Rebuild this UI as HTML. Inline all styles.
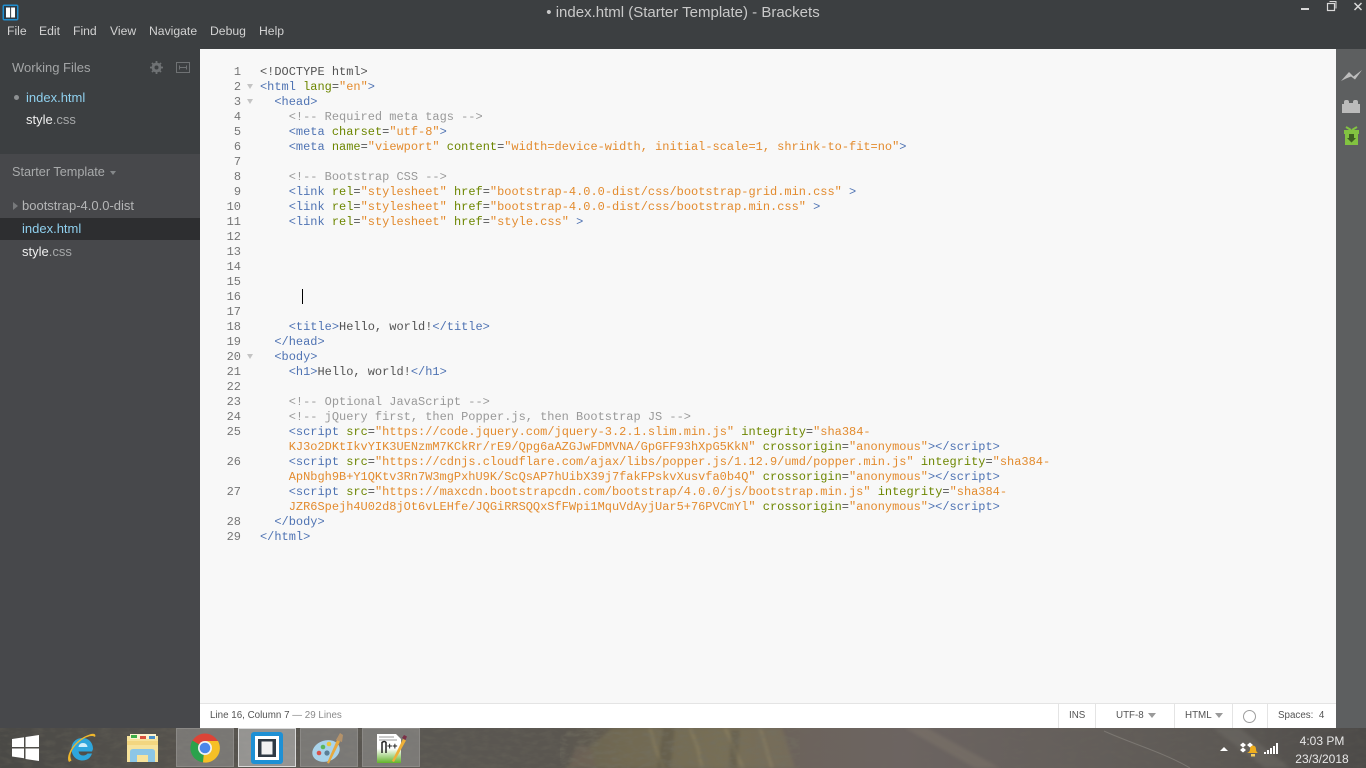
<!DOCTYPE html>
<html><head><meta charset="utf-8"><title>index.html (Starter Template) - Brackets</title>
<style>
html,body{margin:0;padding:0;width:1366px;height:768px;overflow:hidden;background:#3c3f41}
*{box-sizing:border-box}
.a{position:absolute;white-space:pre}
body{font-family:"Liberation Sans",sans-serif}
#tb{left:0;top:0;width:1366px;height:49px;background:#3c3f41}
.m{position:absolute;top:23px;font-size:12.2px;line-height:16px;color:#d2d2d2}
.sb{font-size:12.6px;line-height:16px}
#code,#gut{font-family:"Liberation Mono","DejaVu Sans Mono",monospace;font-size:11.97px;line-height:15px;margin:0}
#code{left:260px;top:65px;color:#535353}
#gut{left:215px;top:65px;width:26px;text-align:right;color:#767676}
.t{color:#4f73b3}.r{color:#6d8600}.s{color:#e38b2e}.c{color:#999}
.st{position:absolute;top:709px;font-size:9.8px;line-height:14px;color:#535353}
.dv{position:absolute;top:704px;width:1px;height:24px;background:#e4e4e4}
.box{position:absolute;top:728px;width:58px;height:39px;border:1px solid #8b8986;background:rgba(170,170,170,.42)}
</style></head><body>
<div class="a" id="tb"></div>
<svg class="a" style="left:2px;top:4px" width="17" height="17" viewBox="0 0 17 17"><rect x=".5" y=".5" width="16" height="16" rx="2" fill="#1f8ed0"/><rect x="2" y="2" width="13" height="13" fill="#2d3a44"/><rect x="4" y="3.500" width="9" height="10" fill="#fff"/><rect x="8.100" y="2" width="1" height="13" fill="#2d3a44"/></svg>
<div class="a" style="left:0;width:1366px;text-align:center;top:4px;font-size:15px;line-height:17px;color:#c9c9c9">• index.html (Starter Template) - Brackets</div>
<span class="m" style="left:7px">File</span><span class="m" style="left:39px">Edit</span><span class="m" style="left:73px">Find</span><span class="m" style="left:110px">View</span><span class="m" style="left:149px">Navigate</span><span class="m" style="left:210px">Debug</span><span class="m" style="left:259px">Help</span>
<svg class="a" style="left:1296px;top:0" width="70" height="14" viewBox="0 0 70 14" fill="none" stroke="#d8d8d8"><path d="M5 9h8" stroke-width="2"/><path d="M33.500 1.500h6.500v7" stroke-width="1"/><rect x="31.500" y="3.500" width="7" height="7" stroke-width="1.200"/><path d="M58.500 3l7 7M65.500 3l-7 7" stroke-width="1.500"/></svg>

<div class="a" style="left:0;top:49px;width:200px;height:105px;background:#3c3f41"></div>
<div class="a" style="left:0;top:154px;width:200px;height:574px;background:#47484b"></div>
<div class="a sb" style="left:12px;top:60px;color:#a3a5a6;font-size:13px">Working Files</div>
<svg class="a" style="left:150px;top:61px" width="13" height="13" viewBox="0 0 13 13"><circle cx="6.500" cy="6.500" r="3.600" fill="none" stroke="#6f7274" stroke-width="2.600"/><path d="M6.500 0v13M0 6.500h13M2 2l9 9M11 2l-9 9" stroke="#6f7274" stroke-width="1.800"/><circle cx="6.500" cy="6.500" r="2" fill="#3c3f41"/></svg>
<svg class="a" style="left:176px;top:62px" width="14" height="11" viewBox="0 0 14 11" fill="none" stroke="#6f7274"><rect x=".5" y=".5" width="13" height="10"/><path d="M3 5.500h8M3.500 3.500v4M10.500 3.500v4"/></svg>
<div class="a" style="left:14px;top:95px;width:5px;height:5px;border-radius:50%;background:#8d9092"></div>
<div class="a sb" style="left:26px;top:90px;color:#8fd0ee;font-size:13px">index.html</div>
<div class="a sb" style="left:26px;top:112px;color:#f0f0f0;font-size:13px">style<span style="color:#a6a8a9">.css</span></div>
<div class="a sb" style="left:12px;top:164px;color:#a8aaab;font-size:12.7px">Starter Template</div>
<div class="a" style="left:110px;top:171px;border:3px solid transparent;border-top:4px solid #85888a"></div>
<div class="a" style="left:13px;top:202px;border:4px solid transparent;border-left:5px solid #77797b"></div>
<div class="a sb" style="left:22px;top:198px;color:#b5b6b7;font-size:13px">bootstrap-4.0.0-dist</div>
<div class="a" style="left:0;top:218px;width:200px;height:22px;background:#2d2e30"></div>
<div class="a sb" style="left:22px;top:221px;color:#8fd0ee;font-size:13px">index.html</div>
<div class="a sb" style="left:22px;top:244px;color:#f0f0f0;font-size:13px">style<span style="color:#a6a8a9">.css</span></div>

<div class="a" style="left:200px;top:49px;width:1136px;height:654px;background:#f8f8f8"></div>
<pre class="a" id="gut">1
2
3
4
5
6
7
8
9
10
11
12
13
14
15
16
17
18
19
20
21
22
23
24
25

26

27

28
29</pre>
<div class="a" style="left:247px;top:84px;border:3px solid transparent;border-top:5px solid #c4c4c4"></div>
<div class="a" style="left:247px;top:99px;border:3px solid transparent;border-top:5px solid #c4c4c4"></div>
<div class="a" style="left:247px;top:354px;border:3px solid transparent;border-top:5px solid #c4c4c4"></div>
<pre class="a" id="code">&lt;!DOCTYPE html&gt;
<span class="t">&lt;html</span> <span class="r">lang</span>=<span class="s">"en"</span><span class="t">&gt;</span>
  <span class="t">&lt;head&gt;</span>
    <span class="c">&lt;!-- Required meta tags --&gt;</span>
    <span class="t">&lt;meta</span> <span class="r">charset</span>=<span class="s">"utf-8"</span><span class="t">&gt;</span>
    <span class="t">&lt;meta</span> <span class="r">name</span>=<span class="s">"viewport"</span> <span class="r">content</span>=<span class="s">"width=device-width, initial-scale=1, shrink-to-fit=no"</span><span class="t">&gt;</span>

    <span class="c">&lt;!-- Bootstrap CSS --&gt;</span>
    <span class="t">&lt;link</span> <span class="r">rel</span>=<span class="s">"stylesheet"</span> <span class="r">href</span>=<span class="s">"bootstrap-4.0.0-dist/css/bootstrap-grid.min.css"</span> <span class="t">&gt;</span>
    <span class="t">&lt;link</span> <span class="r">rel</span>=<span class="s">"stylesheet"</span> <span class="r">href</span>=<span class="s">"bootstrap-4.0.0-dist/css/bootstrap.min.css"</span> <span class="t">&gt;</span>
    <span class="t">&lt;link</span> <span class="r">rel</span>=<span class="s">"stylesheet"</span> <span class="r">href</span>=<span class="s">"style.css"</span> <span class="t">&gt;</span>






    <span class="t">&lt;title&gt;</span>Hello, world!<span class="t">&lt;/title&gt;</span>
  <span class="t">&lt;/head&gt;</span>
  <span class="t">&lt;body&gt;</span>
    <span class="t">&lt;h1&gt;</span>Hello, world!<span class="t">&lt;/h1&gt;</span>

    <span class="c">&lt;!-- Optional JavaScript --&gt;</span>
    <span class="c">&lt;!-- jQuery first, then Popper.js, then Bootstrap JS --&gt;</span>
    <span class="t">&lt;script</span> <span class="r">src</span>=<span class="s">"https://code.jquery.com/jquery-3.2.1.slim.min.js"</span> <span class="r">integrity</span>=<span class="s">"sha384-</span>
<span class="s">    KJ3o2DKtIkvYIK3UENzmM7KCkRr/rE9/Qpg6aAZGJwFDMVNA/GpGFF93hXpG5KkN"</span> <span class="r">crossorigin</span>=<span class="s">"anonymous"</span><span class="t">&gt;&lt;/script&gt;</span>
    <span class="t">&lt;script</span> <span class="r">src</span>=<span class="s">"https://cdnjs.cloudflare.com/ajax/libs/popper.js/1.12.9/umd/popper.min.js"</span> <span class="r">integrity</span>=<span class="s">"sha384-</span>
<span class="s">    ApNbgh9B+Y1QKtv3Rn7W3mgPxhU9K/ScQsAP7hUibX39j7fakFPskvXusvfa0b4Q"</span> <span class="r">crossorigin</span>=<span class="s">"anonymous"</span><span class="t">&gt;&lt;/script&gt;</span>
    <span class="t">&lt;script</span> <span class="r">src</span>=<span class="s">"https://maxcdn.bootstrapcdn.com/bootstrap/4.0.0/js/bootstrap.min.js"</span> <span class="r">integrity</span>=<span class="s">"sha384-</span>
<span class="s">    JZR6Spejh4U02d8jOt6vLEHfe/JQGiRRSQQxSfFWpi1MquVdAyjUar5+76PVCmYl"</span> <span class="r">crossorigin</span>=<span class="s">"anonymous"</span><span class="t">&gt;&lt;/script&gt;</span>
  <span class="t">&lt;/body&gt;</span>
<span class="t">&lt;/html&gt;</span></pre>
<div class="a" style="left:302px;top:289px;width:1px;height:15px;background:#000"></div>

<div class="a" style="left:200px;top:703px;width:1136px;height:25px;background:#fff;border-top:1px solid #e4e4e4"></div>
<span class="st" style="left:210px">Line 16, Column 7 <span style="color:#8a8a8a">— 29 Lines</span></span>
<div class="dv" style="left:1058px"></div><div class="dv" style="left:1095px"></div><div class="dv" style="left:1174px"></div><div class="dv" style="left:1232px"></div><div class="dv" style="left:1267px"></div>
<span class="st" style="left:1069px">INS</span><span class="st" style="left:1116px">UTF-8</span><span class="st" style="left:1185px">HTML</span><span class="st" style="left:1278px">Spaces:&nbsp; 4</span>
<div class="a" style="left:1148px;top:713px;border:4px solid transparent;border-top:5px solid #9a9a9a"></div>
<div class="a" style="left:1215px;top:713px;border:4px solid transparent;border-top:5px solid #9a9a9a"></div>
<div class="a" style="left:1243px;top:710px;width:13px;height:13px;border-radius:50%;border:1px solid #9d9d9d;background:#fff"></div>

<div class="a" style="left:1336px;top:49px;width:30px;height:679px;background:#5d5f60"></div>
<svg class="a" style="left:1340px;top:66px" width="24" height="80" viewBox="0 0 24 80"><path d="M1 15L9 6l4.500 4.500L22 4l-7 9.500-4-3-5 2z" fill="#bdbdbd"/><path d="M2 38h2v-2q0-2 2-2h1q2 0 2 2v1h4v-1q0-2 2-2h1q2 0 2 2v2h2v9H2z" fill="#bbb"/><rect x="5" y="68" width="13" height="11" fill="#82c341"/><path d="M4 64h15v4H4z" fill="#82c341"/><path d="M6 61l5 3M17 61l-5 3" stroke="#82c341" stroke-width="2"/><path d="M9 68h5v4h2l-4.500 4.500L7 72h2z" fill="#3e5f22"/></svg>

<svg class="a" style="left:0;top:728px" width="1366" height="40" viewBox="0 0 1366 40">
<defs>
<linearGradient id="g"><stop offset="0" stop-color="#4a4946"/><stop offset=".125" stop-color="#55524d"/><stop offset=".31" stop-color="#5a5752"/><stop offset=".41" stop-color="#5a5650"/><stop offset=".455" stop-color="#665f50"/><stop offset=".527" stop-color="#6f6755"/><stop offset=".58" stop-color="#6c635c"/><stop offset=".66" stop-color="#6c6461"/><stop offset=".805" stop-color="#635e5a"/><stop offset=".9" stop-color="#5c5854"/><stop offset="1" stop-color="#4c4a48"/></linearGradient>
<filter id="soft" x="-5%" y="-20%" width="110%" height="140%"><feGaussianBlur stdDeviation="1.500"/></filter>
<filter id="noise" x="0" y="0" width="100%" height="100%"><feTurbulence type="fractalNoise" baseFrequency=".09 .22" numOctaves="3" seed="4"/><feColorMatrix values="0 0 0 0 .17 0 0 0 0 .16 0 0 0 0 .12 1.900 0 0 0 -.75"/></filter>
</defs>
<rect width="1366" height="40" fill="url(#g)"/>
<g filter="url(#soft)">
<path d="M612 0h170l13 40H565z" fill="#8c8059" opacity=".28"/>
<path d="M570 40q2-20 10-22t12 6l4 16z" fill="#6e6257" opacity=".7"/>
<path d="M650 0l6 22 8 18M690 0l8 20 4 20M725 0l10 22 8 18M760 0l6 20 6 20" stroke="#b5a675" stroke-width="2" fill="none" opacity=".35"/>
<path d="M675 0l-4 40h-14l6-40zM740 2l-3 38h-8l2-38z" fill="#4d4a3c" opacity=".3"/>
<path d="M905 0h22l73 40h-25z" fill="#8a8170" opacity=".3"/>
<path d="M1213 0h27l50 40h-25z" fill="#716e69" opacity=".45"/>
</g>
<path d="M1104 3c26 12 61 22 86 37" stroke="#7b7772" stroke-width="1" fill="none"/>
<rect x="0" y="0" width="560" height="40" filter="url(#noise)" opacity=".3"/>
<rect x="560" y="0" width="240" height="40" filter="url(#noise)" opacity=".7"/>
<rect x="800" y="0" width="566" height="40" filter="url(#noise)" opacity=".14"/>
</svg>

<svg class="a" style="left:12px;top:735px" width="27" height="26" viewBox="0 0 27 26" fill="#fff"><path d="M0 4l12-1.800V12H0zM13.500 2L27 0v12H13.500zM0 13.500h12v9.800L0 21.500zM13.500 13.500H27V26l-13.500-2z"/></svg>
<svg class="a" style="left:65px;top:732px" width="32" height="32" viewBox="0 0 32 32"><path d="M27 19.500H13.500q.8 4 4.500 4 3 0 4.500-2H27c-1.500 4.500-5 7-9.500 7-6.500 0-11-5-11-11.500S11 6 17.500 6 28 11 28 17z" fill="#2ea6dc"/><path d="M13.500 15h9q-.6-4-4.500-4t-4.500 4z" fill="#cdeefa"/><path d="M4 30C0 24 9 7 26 2c4-1 5 1 4 3-4-3-13 1-20 9-4 5-6 10-3.500 14.500z" fill="#efb72c"/></svg>
<svg class="a" style="left:127px;top:733px" width="32" height="30" viewBox="0 0 32 30"><path d="M0 3h31v26H0z" fill="#f7e39c"/><path d="M3 1h26v5H3z" fill="#fbf3cf"/><rect x="4" y="2" width="6" height="3" fill="#3fae49"/><rect x="13" y="3" width="6" height="3" fill="#d9533e"/><rect x="22" y="3" width="6" height="3" fill="#4a90c8"/><path d="M0 8h31v4H0z" fill="#f3d680"/><path d="M3 29V19q0-3 3-3h19q3 0 3 3v10h-7v-7H10v7z" fill="#8cc6e6"/></svg>

<div class="box" style="left:176px"></div><div class="box" style="left:238px;border:1px solid #d8d8d8;background:rgba(200,200,200,.55)"></div><div class="box" style="left:300px"></div><div class="box" style="left:362px"></div>
<svg class="a" style="left:190px;top:733px" width="30" height="30" viewBox="0 0 30 30"><circle cx="15" cy="15" r="14.500" fill="#dc4437"/><path d="M15 15L2.500 7.500A14.500 14.500 0 0 0 13 29.400z" fill="#2ba24c"/><path d="M15 8h13a14.500 14.500 0 0 1-15 21.400z" fill="#f6c026"/><circle cx="15" cy="15" r="7" fill="#f1f1f1"/><circle cx="15" cy="15" r="5.300" fill="#4a86e8"/></svg>
<svg class="a" style="left:251px;top:732px" width="32" height="32" viewBox="0 0 32 32"><rect width="32" height="32" rx="3" fill="#1e90d4"/><rect x="4" y="4" width="24" height="24" fill="#fff"/><rect x="7" y="7" width="18" height="18" fill="#2f3a45"/><rect x="10.500" y="9.500" width="11" height="13" fill="#f2f2f2"/></svg>
<svg class="a" style="left:312px;top:732px" width="34" height="32" viewBox="0 0 34 32"><ellipse cx="14" cy="19" rx="14" ry="10.500" fill="#a9d3ea" transform="rotate(-18 14 19)"/><circle cx="7" cy="21" r="2.300" fill="#d8524a"/><circle cx="11" cy="15" r="2.300" fill="#5bb75b"/><circle cx="17" cy="12" r="2.300" fill="#e9c53c"/><circle cx="15" cy="21" r="2.600" fill="#5a7f96"/><path d="M15 31l10-23 3 1.500-11 22z" fill="#e7a93f"/><path d="M24 8l4-7 3 2-1 7z" fill="#b4926a"/></svg>
<svg class="a" style="left:376px;top:733px" width="32" height="32" viewBox="0 0 32 32"><defs><linearGradient id="n" x1="0" y1="0" x2="0" y2="1"><stop offset=".5" stop-color="#fff"/><stop offset="1" stop-color="#62b32a"/></linearGradient></defs><path d="M1 1h19l5 5v24H1z" fill="url(#n)"/><path d="M3 4h15M3 7h18" stroke="#999"/><path d="M6 20V9.500q2.500-2 4 0V20" fill="none" stroke="#222" stroke-width="1.500"/><text x="11" y="16" font-family="Liberation Sans" font-size="9" font-weight="700" fill="#222">++</text><path d="M16 28l11-22 3 1.500-12 21.500z" fill="#eeb038"/><path d="M26 5l2-3 3 1.500-1.500 3.500z" fill="#7a3148"/></svg>

<div class="a" style="left:1220px;top:747px;border:4px solid transparent;border-bottom:4px solid #fff;border-top:0"></div>
<svg class="a" style="left:1240px;top:741px" width="18" height="16" viewBox="0 0 18 16"><path d="M0 4l3-2.500L6 4 3 6.500zM7 4l3-2.500L13 4l-3 2.500zM0 9l3-2.500L6 9l-3 2.500z" fill="#fff"/><path d="M7 12q3-1 3-4t3-3.500q3 .5 3 3.500t2 4z" fill="#efae1e"/><rect x="11" y="13" width="4" height="2.500" fill="#f6ce5a"/></svg>
<svg class="a" style="left:1264px;top:743px" width="16" height="12" viewBox="0 0 16 12" fill="#fff"><rect x="0" y="9" width="2" height="2"/><rect x="3" y="7" width="2" height="4"/><rect x="6" y="5" width="2" height="6"/><rect x="9" y="3" width="2" height="8"/><rect x="12" y="0" width="2" height="11"/></svg>
<div class="a" style="left:1290px;width:64px;top:733px;text-align:center;color:#e8e8e8;font-size:12px;line-height:16px">4:03 PM</div>
<div class="a" style="left:1290px;width:64px;top:751px;text-align:center;color:#e8e8e8;font-size:12px;line-height:16px">23/3/2018</div>
</body></html>
